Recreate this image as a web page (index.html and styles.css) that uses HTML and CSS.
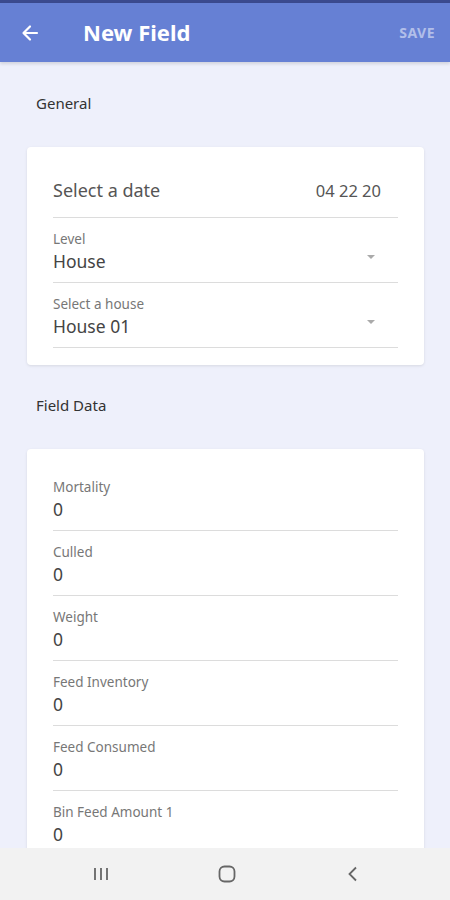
FILE: index.html
```html
<!DOCTYPE html>
<html lang="en">

<head>
  <meta charset="UTF-8" />
  <meta name="viewport" content="width=device-width, initial-scale=1.0" />
  <title>New Field</title>
  <link rel="stylesheet" href="styles.css">
</head>

<body>
  <div class="app">
    <div class="status-line"></div>
    <header class="toolbar">
      <button class="back" aria-label="Back">
        <svg width="20" height="20" viewBox="0 0 20 20">
          <path d="M17 10H4M10 3.5L3.5 10 10 16.5" fill="none" stroke="#fff" stroke-width="2.2" stroke-linecap="round" stroke-linejoin="round" />
        </svg>
      </button>
      <h1 class="title">New Field</h1>
      <span class="save">SAVE</span>
    </header>

    <main class="content">
      <h2 class="section-title">General</h2>
      <section class="card">
        <div class="date-row">
          <span>Select a date</span>
          <span class="date-value">04 22 20</span>
        </div>
        <div class="field select">
          <label>Level</label>
          <div class="value">House</div>
        </div>
        <div class="field select">
          <label>Select a house</label>
          <div class="value">House 01</div>
        </div>
      </section>

      <h2 class="section-title">Field Data</h2>
      <section class="card card-open">
        <div class="field">
          <label>Mortality</label>
          <div class="value">0</div>
        </div>
        <div class="field">
          <label>Culled</label>
          <div class="value">0</div>
        </div>
        <div class="field">
          <label>Weight</label>
          <div class="value">0</div>
        </div>
        <div class="field">
          <label>Feed Inventory</label>
          <div class="value">0</div>
        </div>
        <div class="field">
          <label>Feed Consumed</label>
          <div class="value">0</div>
        </div>
        <div class="field">
          <label>Bin Feed Amount 1</label>
          <div class="value">0</div>
        </div>
      </section>
    </main>

    <nav class="navbar">
      <svg width="22" height="22" viewBox="0 0 22 22">
        <path d="M5 5v12M11 5v12M17 5v12" stroke="#666" stroke-width="1.8" />
      </svg>
      <svg width="22" height="22" viewBox="0 0 22 22">
        <rect x="3.5" y="3.5" width="15" height="15" rx="5" fill="none" stroke="#666" stroke-width="1.8" />
      </svg>
      <svg width="22" height="22" viewBox="0 0 22 22">
        <path d="M14 4.5L7.5 11 14 17.5" fill="none" stroke="#666" stroke-width="1.8" />
      </svg>
    </nav>
  </div>
</body>

</html>
```

FILE: styles.css
```css
:root {
  --primary: #6680d4;
  --page: #eef0fb;
  --divider: #dcdcdc;
}

* {
  box-sizing: border-box;
}

body {
  margin: 0;
  font-family: 'Noto Sans', 'Open Sans', sans-serif;
  color: #444;
  background: var(--page);
}

.app {
  display: flex;
  flex-direction: column;
  height: 900px;
  overflow: hidden;
}

.status-line {
  height: 3px;
  background: #3b4a8e;
}

.toolbar {
  display: flex;
  align-items: center;
  height: 59px;
  padding: 0 15px 0 20px;
  background: var(--primary);
  box-shadow: 0 2px 3px rgba(0, 0, 0, 0.12);
  position: relative;
  z-index: 1;
}

.back {
  display: flex;
  padding: 0;
  border: 0;
  background: none;
  margin-top: 1px;
  margin-right: 43px;
}

.title {
  flex: 1;
  margin: 0 0 2px;
  font-size: 22px;
  font-weight: 700;
  color: #fff;
}

.save {
  font-size: 14px;
  font-weight: 700;
  color: rgba(255, 255, 255, 0.5);
  letter-spacing: 0.5px;
}

.content {
  flex: 1;
  overflow: hidden;
  padding: 0 26px 0 27px;
}

.section-title {
  margin: 31px 0 0 9px;
  font-size: 15px;
  font-weight: 400;
  line-height: 20px;
  color: #333;
}

.card + .section-title {
  margin-top: 30px;
}

.section-title + .card {
  margin-top: 34px;
}

.card {
  padding: 16px 26px 17px;
  background: #fff;
  border-radius: 4px;
  box-shadow: 0 1px 3px rgba(0, 0, 0, 0.1);
}

.date-row {
  display: flex;
  justify-content: space-between;
  align-items: center;
  height: 55px;
  padding-right: 17px;
  font-size: 18px;
  color: #555;
  border-bottom: 1px solid var(--divider);
}

.date-value {
  font-size: 16.5px;
  color: #555;
}

.field {
  position: relative;
  height: 65px;
  padding-top: 13px;
  border-bottom: 1px solid var(--divider);
}

.field label {
  display: block;
  font-size: 13.5px;
  line-height: 16px;
  color: #777;
}

.field .value {
  margin-top: 3px;
  font-size: 17.5px;
  line-height: 22px;
  color: #444;
}

.select::after {
  content: '';
  position: absolute;
  right: 23px;
  top: 37px;
  border-left: 4px solid transparent;
  border-right: 4px solid transparent;
  border-top: 4px solid #aaa;
}

.card-open {
  padding-top: 17px;
  padding-bottom: 0;
  border-radius: 4px 4px 0 0;
}

.navbar {
  display: flex;
  justify-content: center;
  align-items: center;
  gap: 104px;
  height: 52px;
  padding-left: 4px;
  background: #f2f2f2;
  flex-shrink: 0;
}
```
